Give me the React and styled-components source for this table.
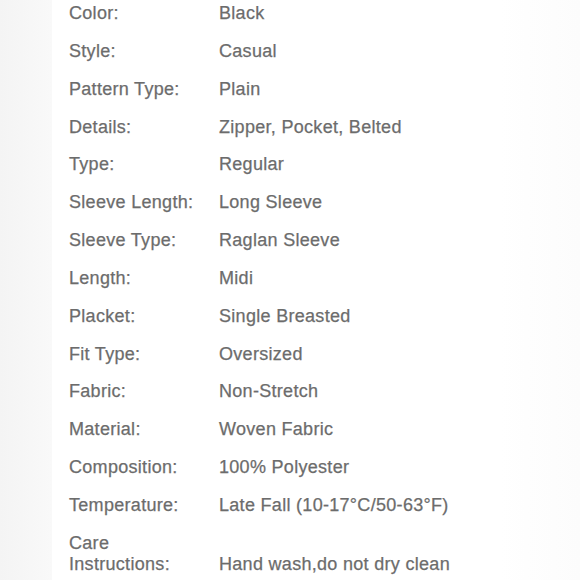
import styled, { createGlobalStyle } from 'styled-components';

const specs = [
  ['Color:', 'Black'],
  ['Style:', 'Casual'],
  ['Pattern Type:', 'Plain'],
  ['Details:', 'Zipper, Pocket, Belted'],
  ['Type:', 'Regular'],
  ['Sleeve Length:', 'Long Sleeve'],
  ['Sleeve Type:', 'Raglan Sleeve'],
  ['Length:', 'Midi'],
  ['Placket:', 'Single Breasted'],
  ['Fit Type:', 'Oversized'],
  ['Fabric:', 'Non-Stretch'],
  ['Material:', 'Woven Fabric'],
  ['Composition:', '100% Polyester'],
  ['Temperature:', 'Late Fall (10-17°C/50-63°F)'],
  ['Care Instructions:', 'Hand wash,do not dry clean'],
];

const GlobalStyle = createGlobalStyle`
  html, body {
    margin: 0;
    padding: 0;
    background: #ffffff;
  }
`;

const App = () => {
  return (
    <>
      <GlobalStyle />
      <Page>
        <Gutter />
        <Sheet>
          <SpecList>
            {specs.map(([label, value]) => (
              <SpecRow key={label}>
                <Label>{label}</Label>
                <Value>{value}</Value>
              </SpecRow>
            ))}
          </SpecList>
        </Sheet>
      </Page>
    </>
  );
};

const Page = styled.div`
  display: flex;
  width: 580px;
  height: 580px;
  overflow: hidden;
  background: #ffffff;
`;

const Gutter = styled.div`
  width: 52px;
  flex-shrink: 0;
  background: linear-gradient(to right, #f4f4f4, #f9f9f9);
`;

const Sheet = styled.div`
  flex: 1;
  padding: 3px 0 0 17px;
  background: linear-gradient(to right, #ffffff 85%, #fcfcfc);
`;

const SpecList = styled.div`
  display: flex;
  flex-direction: column;
  gap: 16.85px;
`;

const SpecRow = styled.div`
  display: grid;
  grid-template-columns: 135px 1fr;
  column-gap: 15px;
  align-items: end;
  font-family: 'Liberation Sans', Arial, sans-serif;
  font-size: 18px;
  line-height: 21px;
  letter-spacing: 0.3px;
  color: #6c6c6c;
  -webkit-text-stroke: 0.25px #6c6c6c;
`;

const Label = styled.div``;

const Value = styled.div`
  white-space: nowrap;
`;

export default App;
